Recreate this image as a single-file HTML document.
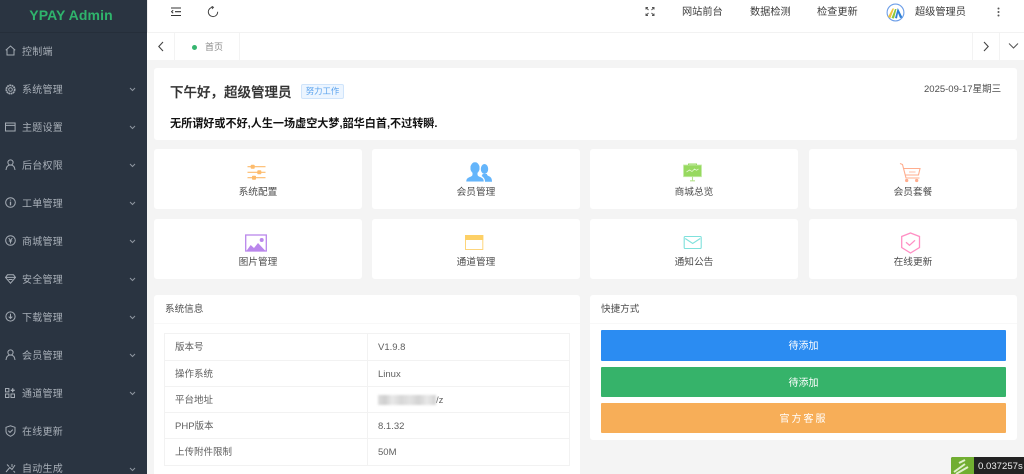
<!DOCTYPE html>
<html lang="zh"><head><meta charset="utf-8"><title>YPAY Admin</title>
<style>
*{box-sizing:border-box;margin:0;padding:0}
html,body{width:1024px;height:474px;overflow:hidden;background:#f4f4f4}
body{font-family:"Liberation Sans","Noto Sans CJK SC",sans-serif;position:relative;color:#555}
.a{position:absolute;white-space:nowrap}
#side{position:absolute;left:0;top:0;width:147px;height:474px;background:#2a3441;overflow:hidden}
#logo{position:absolute;left:0;top:0;width:142px;height:32px;text-align:center;font-size:14px;font-weight:bold;line-height:30px;color:#2fb46c;letter-spacing:.1px}
#line{position:absolute;left:0;top:32px;width:147px;height:1px;background:#252e3a}
.mi{position:absolute;left:22px;font-size:10px;line-height:14px;color:#a8afb8;letter-spacing:.25px}
#side svg{position:absolute;fill:none;stroke:#a4abb4;stroke-width:1}
#side svg.ch{stroke:#8e96a0;left:128px}
#hdr{position:absolute;left:147px;top:0;width:877px;height:33px;background:#fff;border-bottom:1px solid #f2f2f2;box-shadow:inset 1px 0 0 #eee}
#tabs{position:absolute;left:147px;top:33px;width:877px;height:27px;background:#fff}
.h{position:absolute;top:6px;font-size:10.2px;line-height:14px;color:#3c3c3c}
.card{position:absolute;background:#fff;border-radius:3px}
.c{width:208px;height:60px}
.c span{position:absolute;left:0;right:0;top:37px;text-align:center;font-size:9.7px;line-height:14px;color:#4d4d4d}
.c svg{position:absolute;left:84px;top:11px;width:40px;height:24px}
.row{position:absolute;left:164px;width:406px;font-size:9.5px;line-height:26px;color:#5f5f5f;border:1px solid #f2f2f2;height:27px}
.row b{font-weight:normal;position:absolute;left:10px;top:1px}
.row i{font-style:normal;position:absolute;left:213px;top:1px}
.row:before{content:"";position:absolute;left:202px;top:0;bottom:0;width:1px;background:#f2f2f2}
.btn{position:absolute;left:601px;width:405px;color:#fff;text-align:center;font-size:10px;border-radius:1px}
</style></head><body>

<div id="side">
<div id="logo">YPAY Admin</div><div id="line"></div>
<svg style="left:5px;top:45px" width="11" height="11" viewBox="0 0 11 11"><path d="M.8 5.200 5.500 1l4.700 4.200M2 4.400V10h7V4.400"/></svg>
<div class="mi" style="top:46px">控制端</div>

<svg style="left:5px;top:84px" width="11" height="11" viewBox="0 0 11 11"><circle cx="5.500" cy="5.500" r="4.200" stroke-width="1.700" stroke-dasharray="1.800 .5"/><circle cx="5.500" cy="5.500" r="1.800"/></svg>
<div class="mi" style="top:84px">系统管理</div>

<svg style="left:5px;top:122px" width="11" height="10" viewBox="0 0 11 10"><path d="M.5 1h9.600v8H.5zM.5 3.400h9.600"/></svg>
<div class="mi" style="top:122px">主题设置</div>

<svg style="left:5px;top:159px" width="11" height="12" viewBox="0 0 11 12"><circle cx="5.500" cy="3.500" r="2.600"/><path d="M1 11c.3-3 1.800-5 4.500-5s4.200 2 4.500 5"/></svg>
<div class="mi" style="top:160px">后台权限</div>

<svg style="left:5px;top:197px" width="11" height="11" viewBox="0 0 11 11"><circle cx="5.500" cy="5.500" r="4.800"/><path d="M5.500 2.600v.9M5.500 4.600V8.400" stroke-width="1.300"/></svg>
<div class="mi" style="top:198px">工单管理</div>

<svg style="left:5px;top:235px" width="11" height="11" viewBox="0 0 11 11"><circle cx="5.500" cy="5.500" r="4.800"/><path d="M3.700 3l1.800 2.500L7.300 3M5.500 5.500V8.500M3.800 6h3.400"/></svg>
<div class="mi" style="top:236px">商城管理</div>

<svg style="left:5px;top:274px" width="11" height="10" viewBox="0 0 11 10"><path d="M2.500.8h6l2 2.600-5 5.800-5-5.800zM.8 3.400h9.400M3.500 5.500h4"/></svg>
<div class="mi" style="top:274px">安全管理</div>

<svg style="left:5px;top:311px" width="11" height="11" viewBox="0 0 11 11"><circle cx="5.500" cy="5.500" r="4.600"/><path d="M5.500 2.800v4.400M3.700 5.600l1.800 1.800 1.800-1.800"/></svg>
<div class="mi" style="top:312px">下载管理</div>

<svg style="left:5px;top:349px" width="11" height="12" viewBox="0 0 11 12"><circle cx="5.500" cy="3.500" r="2.600"/><path d="M1 11c.3-3 1.800-5 4.500-5s4.200 2 4.500 5"/></svg>
<div class="mi" style="top:350px">会员管理</div>

<svg style="left:5px;top:388px" width="10" height="10" viewBox="0 0 10 10"><path d="M.5.500h3.400v3.400H.5zM.5 6h3.400v3.500H.5zM6 6h3.500v3.500H6z"/><path d="M7.700.300v4M5.700 2.300h4" stroke-width="1.300"/></svg>
<div class="mi" style="top:388px">通道管理</div>

<svg style="left:5px;top:425px" width="11" height="12" viewBox="0 0 11 12"><path d="M1 2.300 5.500.8 10 2.300v4c0 2.500-2 4-4.500 5C3 10.300 1 8.800 1 6.300z"/><path d="M3.300 5.800l1.700 1.600 2.800-2.800"/></svg>
<div class="mi" style="top:426px">在线更新</div>

<svg style="left:5px;top:463px" width="11" height="10" viewBox="0 0 11 10"><path d="M1 9l3.800-4.500L7 6.500 10 2M2 1.500l2 2M7 1v3M8.500 8l1.500 1.500"/></svg>
<div class="mi" style="top:463px">自动生成</div>

<svg class="ch" style="top:86px" width="9" height="6" viewBox="0 0 9 6"><path d="M2 2 4.500 4.500 7 2"/></svg>
<svg class="ch" style="top:124px" width="9" height="6" viewBox="0 0 9 6"><path d="M2 2 4.500 4.500 7 2"/></svg>
<svg class="ch" style="top:162px" width="9" height="6" viewBox="0 0 9 6"><path d="M2 2 4.500 4.500 7 2"/></svg>
<svg class="ch" style="top:200px" width="9" height="6" viewBox="0 0 9 6"><path d="M2 2 4.500 4.500 7 2"/></svg>
<svg class="ch" style="top:238px" width="9" height="6" viewBox="0 0 9 6"><path d="M2 2 4.500 4.500 7 2"/></svg>
<svg class="ch" style="top:276px" width="9" height="6" viewBox="0 0 9 6"><path d="M2 2 4.500 4.500 7 2"/></svg>
<svg class="ch" style="top:314px" width="9" height="6" viewBox="0 0 9 6"><path d="M2 2 4.500 4.500 7 2"/></svg>
<svg class="ch" style="top:352px" width="9" height="6" viewBox="0 0 9 6"><path d="M2 2 4.500 4.500 7 2"/></svg>
<svg class="ch" style="top:390px" width="9" height="6" viewBox="0 0 9 6"><path d="M2 2 4.500 4.500 7 2"/></svg>
<svg class="ch" style="top:466px" width="9" height="6" viewBox="0 0 9 6"><path d="M2 2 4.500 4.500 7 2"/></svg>
</div>

<div id="hdr">
<svg class="a" style="left:24px;top:7px" width="10" height="10" viewBox="0 0 10 10" fill="none" stroke="#333" stroke-width="1.100"><path d="M0 1h10M4 4.700h6M0 8.500h10"/><path d="M2.200 3.200.5 4.700l1.700 1.500" stroke-width="1"/></svg>
<svg class="a" style="left:60px;top:6px" width="12" height="12" viewBox="0 0 12 12" fill="none" stroke="#444" stroke-width="1"><path d="M10.700 5.800A4.700 4.700 0 1 1 6 1.200"/><path d="M4.500 0 6.500 1.300 5 3" stroke-width=".9"/></svg>
<svg class="a" style="left:498px;top:6px" width="10" height="11" viewBox="0 0 10 11" fill="none" stroke="#555" stroke-width="1"><path d="M1 3.500V1.500h2M9 3.500V1.500H7M1 7.500v2h2M9 7.500v2H7M1.500 2 3.500 4M8.500 2 6.500 4M1.500 9l2-2M8.500 9l-2-2"/></svg>
<div class="h" style="left:535px">网站前台</div>
<div class="h" style="left:603px">数据检测</div>
<div class="h" style="left:670px">检查更新</div>
<svg class="a" style="left:739px;top:3px" width="19" height="19" viewBox="0 0 19 19"><circle cx="9.500" cy="9.500" r="8.400" fill="#fff" stroke="#6e9fe8" stroke-width="1.100"/><path d="M2 14 6.500 5.500 8 5.500 4.500 15z" fill="#f3c43a"/><path d="M5.500 15 9 6 10.500 6 8 15.500z" fill="#8cc63f"/><path d="M9 15 11.800 5 16.500 14.500 14 15 12 10 11 15.500z" fill="#2e7fd6"/></svg>
<div class="h" style="left:768px">超级管理员</div>
<svg class="a" style="left:848.500px;top:7px" width="5" height="11" viewBox="0 0 5 11" fill="#555"><circle cx="2.500" cy="1.500" r="1"/><circle cx="2.500" cy="5" r="1"/><circle cx="2.500" cy="8.500" r="1"/></svg>
</div>

<div id="tabs">
<div class="a" style="left:27px;top:0;width:1px;height:27px;background:#f3f3f3"></div>
<div class="a" style="left:92px;top:0;width:1px;height:27px;background:#f3f3f3"></div>
<div class="a" style="left:825px;top:0;width:1px;height:27px;background:#f3f3f3"></div>
<div class="a" style="left:852px;top:0;width:1px;height:27px;background:#f3f3f3"></div>
<svg class="a" style="left:10px;top:8px" width="8" height="11" viewBox="0 0 8 11" fill="none" stroke="#444" stroke-width="1.100"><path d="M6 1 1.800 5.500 6 10"/></svg>
<div class="a" style="left:44.500px;top:12px;width:5px;height:5px;border-radius:50%;background:#36b56f"></div>
<div class="a" style="left:58px;top:8px;font-size:9px;line-height:13px;color:#8a8a8a">首页</div>
<svg class="a" style="left:835px;top:8px" width="8" height="11" viewBox="0 0 8 11" fill="none" stroke="#444" stroke-width="1.100"><path d="M2 1 6.200 5.500 2 10"/></svg>
<svg class="a" style="left:861px;top:9px" width="11" height="8" viewBox="0 0 11 8" fill="none" stroke="#555" stroke-width="1"><path d="M1 1.500 5.500 6 10 1.500"/></svg>
</div>

<div class="card" style="left:154px;top:68px;width:863px;height:72px"></div>
<div class="a" style="left:170px;top:84px;font-size:13.500px;line-height:18px;font-weight:500;color:#333;-webkit-text-stroke:.25px #333">下午好，超级管理员</div>
<div class="a" style="left:301px;top:84px;width:43px;height:15px;background:#ecf5ff;border:1px solid #cfe4fb;border-radius:2px;font-size:8.400px;line-height:13px;text-align:center;color:#5ba3ee">努力工作</div>
<div class="a" style="left:170px;top:116px;font-size:11.100px;line-height:16px;font-weight:bold;color:#111">无所谓好或不好,人生一场虚空大梦,韶华白首,不过转瞬.</div>
<div class="a" style="left:924px;top:83px;font-size:9.500px;line-height:14px;color:#4d4d4d">2025-09-17星期三</div>

<div class="card c" style="left:154px;top:149px"><span>系统配置</span>
<svg viewBox="0 0 40 24" fill="none" stroke="#fdbb6c" stroke-width="1.100"><path d="M9.500 6.700h18M9.500 12.300h18M9.500 17.700h18"/><g fill="#fdbb6c" stroke="none"><rect x="12.700" y="4.700" width="4" height="4" rx=".8"/><rect x="19.300" y="10.300" width="4" height="4" rx=".8"/><rect x="14" y="15.700" width="4" height="4" rx=".8"/></g></svg></div>
<div class="card c" style="left:372px;top:149px"><span>会员管理</span>
<svg viewBox="0 0 40 24" fill="#64b5fb"><ellipse cx="28.500" cy="9" rx="3.700" ry="5"/><path d="M29 21.700c0-3-1.500-4.500-3.500-5.800.6-.4 1-.9 1-1.900h4.500c0 1 .5 1.500 1.500 2 2.500 1 3.500 2.500 3.500 5.700z"/><g stroke="#fff" stroke-width=".5"><ellipse cx="19" cy="8" rx="4.800" ry="5.900"/><path d="M10 21.800c0-3 1.500-4.200 4.500-5.300 1.500-.6 2-1.500 2-2.500h5c0 1 .5 1.900 2 2.500 3 1.100 4.500 2.300 4.500 5.300z"/></g><ellipse cx="19" cy="8" rx="4.500" ry="5.700"/><path d="M16.500 12h5v3h-5z"/></svg></div>
<div class="card c" style="left:590px;top:149px"><span>商城总览</span>
<svg viewBox="0 0 40 24"><rect x="9.500" y="5" width="18" height="11.700" fill="#97d95f" stroke="#c6ecab" stroke-width=".8"/><path d="M14.500 5V4h8v1" fill="none" stroke="#97d95f"/><path d="M18.500 16.700V20.500M16 20.800h5" stroke="#b5e48d" stroke-width="1.100"/><path d="M12.500 12l3-2 2.500 1.500 2.500-2.500 2 1.300 2-1.300" fill="none" stroke="#e2f5d0" stroke-width=".8"/></svg></div>
<div class="card c" style="left:809px;top:149px"><span>会员套餐</span>
<svg viewBox="0 0 40 24" fill="none" stroke="#ffad8e" stroke-width="1.100"><path d="M7 3.500 9.500 4.500 13 18H26.500M10 8.500H27L25.500 15H12"/><path d="M16 12h6.500" stroke-width=".8"/><circle cx="13.700" cy="20.500" r="1.100" fill="#ffad8e"/><circle cx="23.700" cy="20.500" r="1.100" fill="#ffad8e"/></svg></div>

<div class="card c" style="left:154px;top:219px"><span>图片管理</span>
<svg viewBox="0 0 40 24"><rect x="7.700" y="5" width="20.600" height="16" fill="#fff" stroke="#ba87ec" stroke-width="1.300"/><path d="M8 21.500 12.700 15 16 18l4-5 8 8.500z" fill="#ba87ec"/><circle cx="23.700" cy="10" r="2" fill="#ba87ec"/></svg></div>
<div class="card c" style="left:372px;top:219px"><span>通道管理</span>
<svg viewBox="0 0 40 24"><rect x="9.500" y="5.500" width="17.300" height="14" fill="#fff" stroke="#fdd57c"/><rect x="9" y="5" width="18.300" height="5" fill="#fdd066"/></svg></div>
<div class="card c" style="left:590px;top:219px"><span>通知公告</span>
<svg viewBox="0 0 40 24" fill="none" stroke="#7fe1dc" stroke-width="1.100"><rect x="10.200" y="6.500" width="17" height="12" rx="1"/><path d="M11.200 8.500 18.700 13.500 26.200 8.500"/></svg></div>
<div class="card c" style="left:809px;top:219px"><span>在线更新</span>
<svg viewBox="0 0 40 24" fill="none" stroke="#ff8fc4" stroke-width="1.300"><path d="M17.500 3 26.500 6.500V17.500L17.500 23 8.700 17.500V6.500z"/><path d="M13 12.300l3.500 3 5.500-5"/></svg></div>

<div class="card" style="left:154px;top:295px;width:426px;height:185px"></div>
<div class="a" style="left:154px;top:323px;width:426px;height:1px;background:#f8f8f8"></div>
<div class="a" style="left:165px;top:303px;font-size:9.600px;line-height:14px;color:#4d4d4d">系统信息</div>
<div class="row" style="top:333px;height:28px"><b>版本号</b><i>V1.9.8</i></div>
<div class="row" style="top:360px"><b>操作系统</b><i>Linux</i></div>
<div class="row" style="top:386px"><b>平台地址</b><i><span style="display:inline-block;width:58px">&nbsp;</span>/z</i>
<div class="a" style="left:213px;top:8px;width:58px;height:10px;background:linear-gradient(90deg,#ddd,#cfcfcf 12%,#e9e9e9 25%,#d7d7d7 40%,#e2e2e2 55%,#d3d3d3 70%,#e8e8e8 85%,#d2d2d2);filter:blur(1px)"></div></div>
<div class="row" style="top:412px"><b>PHP版本</b><i>8.1.32</i></div>
<div class="row" style="top:438px;height:28px"><b>上传附件限制</b><i>50M</i></div>

<div class="card" style="left:590px;top:295px;width:427px;height:145px"></div>
<div class="a" style="left:590px;top:323px;width:427px;height:1px;background:#f8f8f8"></div>
<div class="a" style="left:601px;top:303px;font-size:9.600px;line-height:14px;color:#4d4d4d">快捷方式</div>
<div class="btn" style="top:330px;height:31px;line-height:33px;background:#2b8cf2">待添加</div>
<div class="btn" style="top:367px;height:30px;line-height:33px;background:#36b36a">待添加</div>
<div class="btn" style="top:403px;height:30px;line-height:33px;background:#f7ae58;letter-spacing:2px">官方客服</div>

<div class="a" style="left:951px;top:457px;width:73px;height:17px;background:#222;border-radius:2px 0 0 0"></div>
<div class="a" style="left:951px;top:457px;width:23px;height:17px;background:#71ae31;border-radius:2px 0 0 0"></div>
<svg class="a" style="left:951px;top:457px" width="23" height="17" viewBox="0 0 23 17" fill="none" stroke="#dff0cc" stroke-width="2"><path d="M3 15 14 7M5 17 17 10M8 6l6-3"/></svg>
<div class="a" style="left:978px;top:460px;font-size:9.600px;line-height:14px;color:#eee">0.037257s</div>
</body></html>
